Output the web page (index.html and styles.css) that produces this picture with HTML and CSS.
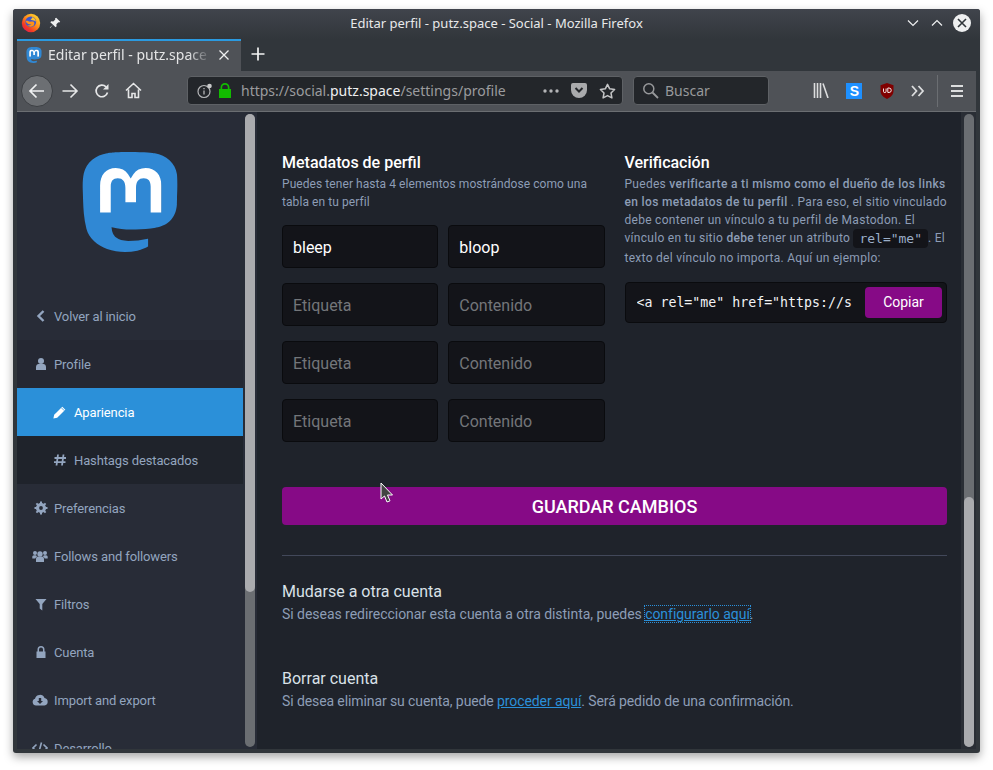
FILE: index.html
```html
<!DOCTYPE html>
<html lang="es">
  <head>
    <meta charset="utf-8" />
    <title>Editar perfil - putz.space - Social - Mozilla Firefox</title>
    <link rel="stylesheet" href="styles.css">
  </head>
  <body>
    <svg width="0" height="0" class="defs">
      <defs>
        <symbol id="masto" viewBox="0 0 24 24">
          <rect x="4.6" y="3.6" width="15" height="11.1" fill="#fff"/>
          <path fill="#3088d4" d="M23.268 5.313c-.35-2.578-2.617-4.61-5.304-5.004C17.51.242 15.792 0 11.813 0h-.03c-3.98 0-4.835.242-5.288.309C3.882.692 1.496 2.518.917 5.127.64 6.412.61 7.837.661 9.143c.074 1.874.088 3.745.26 5.611.118 1.24.325 2.47.62 3.68.55 2.237 2.777 4.098 4.96 4.857 2.336.792 4.849.923 7.256.38.265-.061.527-.132.786-.213.585-.184 1.27-.39 1.774-.753a.057.057 0 0 0 .023-.043v-1.809a.052.052 0 0 0-.02-.041.053.053 0 0 0-.046-.01 20.282 20.282 0 0 1-4.709.545c-2.73 0-3.463-1.284-3.674-1.818a5.593 5.593 0 0 1-.319-1.433.053.053 0 0 1 .066-.054c1.517.363 3.072.546 4.632.546.376 0 .75 0 1.125-.01 1.57-.044 3.224-.124 4.768-.422.038-.008.077-.015.11-.024 2.435-.464 4.753-1.92 4.989-5.604.008-.145.03-1.52.03-1.67.002-.512.167-3.63-.024-5.545zm-3.748 9.195h-2.561V8.29c0-1.309-.55-1.976-1.67-1.976-1.23 0-1.846.79-1.846 2.35v3.403h-2.546V8.663c0-1.56-.617-2.35-1.848-2.35-1.112 0-1.668.668-1.67 1.977v6.218H4.822V8.102c0-1.31.337-2.35 1.011-3.12.696-.77 1.608-1.164 2.74-1.164 1.311 0 2.302.5 2.962 1.498l.638 1.06.638-1.06c.66-.999 1.65-1.498 2.96-1.498 1.13 0 2.043.395 2.74 1.164.675.77 1.012 1.81 1.012 3.12z"/>
        </symbol>
      </defs>
    </svg>

    <div class="window">
      <!-- title bar -->
      <div class="titlebar">
        <svg class="ff-logo" width="20" height="20" viewBox="0 0 20 20">
          <defs>
            <linearGradient id="ffg" x1="0.85" y1="0.05" x2="0.15" y2="0.9">
              <stop offset="0" stop-color="#ffd52e"/>
              <stop offset="0.45" stop-color="#ff8f1a"/>
              <stop offset="0.8" stop-color="#f23a24"/>
              <stop offset="1" stop-color="#e0204f"/>
            </linearGradient>
          </defs>
          <circle cx="10" cy="10" r="9.200" fill="url(#ffg)"/>
          <circle cx="9.800" cy="8.800" r="5.400" fill="#3f56cc"/>
          <path fill="#ff9216" d="M4.800 8.200c.8-.5 2-.4 2.700.1.600.5 1.700.5 3 .3 1.600-.3 2.600.2 2.800 1.300.3 2.100-1.400 3.900-3.600 3.900-1.500 0-2.700-.7-3.400-1.700 1.500.6 3.200.2 4.100-1-1.700.5-3.400.1-4.500-1.100C5.300 9.500 4.900 8.900 4.800 8.200z"/>
          <path fill="#ffc42a" d="M11 4.200c2.600.4 4.100 2.500 3.700 4.900-.4-1.200-1.500-1.900-3-1.900-1 0-1.700-.2-2.200-.6.700-.6 1.600-1.200 1.500-2.400z"/>
        </svg>
        <svg class="pin" width="12" height="12" viewBox="0 0 12 12">
          <path fill="#eff0f1" d="M7.200.8l4 4-1 .8-.8-.3-2 2 .2 2-1 1L4 7.700 1.200 11 .8 10.600 4 7.800 1.300 5.200l1-1 2 .2 2-2-.3-.8z"/>
        </svg>
        <div class="win-title">Editar perfil - putz.space - Social - Mozilla Firefox</div>
        <div class="win-btns">
          <svg width="14" height="8" viewBox="0 0 14 8"><path d="M2 1.500l5 5 5-5" fill="none" stroke="#eff0f1" stroke-width="1.200"/></svg>
          <svg width="14" height="8" viewBox="0 0 14 8"><path d="M2 6.500l5-5 5 5" fill="none" stroke="#eff0f1" stroke-width="1.200"/></svg>
          <span class="win-close">
            <svg width="18" height="18" viewBox="0 0 18 18"><path d="M5 5l8 8M13 5l-8 8" stroke="#31363b" stroke-width="1.600"/></svg>
          </span>
        </div>
      </div>

      <!-- tabs -->
      <div class="tabbar">
        <div class="tab">
          <svg class="tab-icon" width="16" height="16"><use href="#masto"/></svg>
          <span class="tab-title">Editar perfil - putz.space - Social</span>
          <svg class="tab-close" width="12" height="12" viewBox="0 0 12 12"><path d="M1.500 1.500l9 9M10.500 1.500l-9 9" stroke="#eff0f1" stroke-width="1.300"/></svg>
        </div>
        <svg class="new-tab" width="16" height="16" viewBox="0 0 16 16"><path d="M8 1.500v13M1.500 8h13" stroke="#f2f3f4" stroke-width="1.700"/></svg>
      </div>

      <!-- toolbar -->
      <div class="toolbar">
        <div class="back-btn">
          <svg width="20" height="20" viewBox="0 0 20 20"><path d="M17 10H3.500M9.500 3.500L3 10l6.500 6.500" fill="none" stroke="#f0f1f2" stroke-width="1.700"/></svg>
        </div>
        <svg class="tb-icon" width="18" height="18" viewBox="0 0 18 18"><path d="M1.500 9h14M9.500 2.500L16 9l-6.500 6.500" fill="none" stroke="#e6e7e8" stroke-width="1.600"/></svg>
        <svg class="tb-icon" width="16" height="16" viewBox="0 0 16 16"><path d="M13.500 9.500A5.800 5.800 0 1 1 12 3.800" fill="none" stroke="#e6e7e8" stroke-width="1.700"/><path d="M14.500 1v5.500H9z" fill="#e6e7e8"/></svg>
        <svg class="tb-icon" width="17" height="17" viewBox="0 0 17 17"><path d="M1 8.500L8.500 1.500 16 8.500M3.500 7.500v8h3.500v-4h3v4h3.500v-8" fill="none" stroke="#e6e7e8" stroke-width="1.600"/></svg>

        <div class="urlbar">
          <svg width="16" height="16" viewBox="0 0 16 16"><circle cx="7" cy="8.500" r="6" fill="none" stroke="#b4b5b7" stroke-width="1.200"/><path d="M7 7.500v4M7 5v1.200" stroke="#b4b5b7" stroke-width="1.300"/><circle cx="12.500" cy="3" r="2.300" fill="#c8c9ca"/></svg>
          <svg class="lock" width="14" height="15" viewBox="0 0 14 15"><path fill="#12bc00" d="M1 6h1.500V4.500a4.500 4.500 0 0 1 9 0V6H13v9H1zm3.200 0h5.600V4.500a2.800 2.800 0 0 0-5.600 0z"/></svg>
          <div class="url"><span>https://social.</span><b>putz.space</b><span>/settings/profile</span></div>
          <svg class="dots" width="16" height="4" viewBox="0 0 16 4"><circle cx="2" cy="2" r="1.700" fill="#b4b5b7"/><circle cx="8" cy="2" r="1.700" fill="#b4b5b7"/><circle cx="14" cy="2" r="1.700" fill="#b4b5b7"/></svg>
          <svg class="pocket" width="16" height="15" viewBox="0 0 16 15"><path fill="#a9aaac" d="M2 0h12a2 2 0 0 1 2 2v5a8 8 0 0 1-16 0V2a2 2 0 0 1 2-2z"/><path d="M4.500 5L8 8.500 11.500 5" fill="none" stroke="#23262a" stroke-width="2"/></svg>
          <svg class="star" width="17" height="16" viewBox="0 0 17 16"><path d="M8.500 1.300l2.200 4.500 4.900.7-3.600 3.500.9 4.900-4.400-2.300-4.400 2.300.9-4.900L1.400 6.500l4.900-.7z" fill="none" stroke="#c4c5c6" stroke-width="1.500" stroke-linejoin="round"/></svg>
        </div>

        <div class="searchbar">
          <svg width="17" height="17" viewBox="0 0 17 17"><circle cx="6.800" cy="6.800" r="5" fill="none" stroke="#98999b" stroke-width="1.500"/><path d="M10.500 10.500l5.500 5.500" stroke="#98999b" stroke-width="1.800"/></svg>
          <span>Buscar</span>
        </div>

        <div class="addons">
          <svg width="16" height="15" viewBox="0 0 16 15"><path d="M1.500 0v15M4.500 0v15M7.500 0v15M10 .500L15 15" stroke="#dcddde" stroke-width="1.600"/></svg>
          <span class="s-ext">S</span>
          <svg width="14" height="16" viewBox="0 0 14 16"><path fill="#800000" d="M7 0l6.500 2.200V8c0 3.600-3 6.500-6.500 8C3.500 14.500.500 11.600.500 8V2.200z"/><path d="M3.500 5.500v2.800a1.300 1.300 0 0 0 2.600 0V5.500M7.800 5v4.500h1.200a2.200 2.200 0 0 0 0-4.500z" fill="none" stroke="#fff" stroke-width=".9"/></svg>
          <svg width="14" height="12" viewBox="0 0 14 12"><path d="M1 1l4.500 5L1 11M7.500 1L12 6l-4.500 5" fill="none" stroke="#dcddde" stroke-width="1.800"/></svg>
        </div>
        <div class="tb-sep"></div>
        <div class="burger"><i></i><i></i><i></i></div>
      </div>

      <!-- page -->
      <div class="page">
        <div class="sidebar">
          <div class="side-inner">
            <div class="logo"><svg width="100" height="100"><use href="#masto"/></svg></div>
            <ul class="nav">
              <li>
                <a><svg class="fa" viewBox="0 0 14 14"><path d="M9.500 2L4.500 7l5 5" fill="none" stroke="currentColor" stroke-width="2.400"/></svg>Volver al inicio</a>
              </li>
              <li class="nav-group">
                <a class="nav-parent"><svg class="fa" viewBox="0 0 14 14"><circle cx="7" cy="4" r="3" fill="currentColor"/><path d="M2 13V10c0-2 1.300-3 2.500-3h5c1.200 0 2.500 1 2.500 3v3z" fill="currentColor"/></svg>Profile</a>
                <a class="nav-sub active"><svg class="fa" viewBox="0 0 14 14"><path d="M1.200 9.800L9.300 1.700l3 3-8.100 8.100-3.800.8z" fill="currentColor"/><path d="M8.300 2.700l3 3" stroke="#2b90d9" stroke-width=".8"/></svg>Apariencia</a>
                <a class="nav-sub"><svg class="fa" viewBox="0 0 14 14"><path d="M5 1.500l-1.500 11M10.500 1.500L9 12.500M1.500 5h11.500M1 9.200h11.500" fill="none" stroke="currentColor" stroke-width="1.800"/></svg>Hashtags destacados</a>
              </li>
              <li>
                <a><svg class="fa" viewBox="0 0 14 14"><circle cx="7" cy="7" r="3.500" fill="none" stroke="currentColor" stroke-width="3.200"/><path d="M7 .500v2.400M7 11.100v2.400M.500 7h2.400M11.100 7h2.400M2.400 2.400l1.700 1.700M9.900 9.900l1.700 1.700M2.400 11.600l1.700-1.700M9.900 4.100l1.700-1.700" stroke="currentColor" stroke-width="2"/></svg>Preferencias</a>
              </li>
              <li>
                <a><svg class="fa wide" viewBox="0 0 16 14"><circle cx="8" cy="5" r="2.700" fill="currentColor"/><circle cx="3" cy="4" r="2" fill="currentColor"/><circle cx="13" cy="4" r="2" fill="currentColor"/><path d="M4 13V10c0-1.500 1-2.400 2-2.400h4c1 0 2 .9 2 2.400v3zM.300 9.500V8c0-1 .700-1.800 1.700-1.800h2.200c.2.500.500 1 .900 1.300-1 .5-1.600 1.200-1.800 2zM15.700 9.500V8c0-1-.7-1.800-1.700-1.800h-2.200c-.2.500-.5 1-.9 1.300 1 .5 1.600 1.200 1.800 2z" fill="currentColor"/></svg>Follows and followers</a>
              </li>
              <li>
                <a><svg class="fa" viewBox="0 0 14 14"><path d="M1.500 2h11L8.300 7v6.500L5.700 11.500V7z" fill="currentColor"/></svg>Filtros</a>
              </li>
              <li>
                <a><svg class="fa" viewBox="0 0 14 14"><path d="M2.500 6.500h1V4.500a3.500 3.500 0 0 1 7 0v2h1v6.500h-9zm2.500 0h4V4.500a2 2 0 0 0-4 0z" fill="currentColor"/></svg>Cuenta</a>
              </li>
              <li>
                <a><svg class="fa wide" viewBox="0 0 16 14"><path fill="currentColor" fill-rule="evenodd" d="M4 12.500A3.500 3.500 0 0 1 3 5.700 5 5 0 0 1 12.500 5 3.800 3.800 0 0 1 12.500 12.500zM6.800 5v3H5l3 3 3-3H9.200V5z"/></svg>Import and export</a>
              </li>
              <li>
                <a><svg class="fa wide" viewBox="0 0 16 14"><path d="M4.500 3.500L1 7l3.500 3.500M11.500 3.500L15 7l-3.500 3.500M9.500 1.500l-3 11" fill="none" stroke="currentColor" stroke-width="1.600"/></svg>Desarrollo</a>
              </li>
            </ul>
          </div>
          <div class="scroll"><div class="thumb side-thumb"></div></div>
        </div>

        <div class="main">
          <div class="content">
            <div class="cols">
              <div class="col">
                <h4>Metadatos de perfil</h4>
                <p class="hint">Puedes tener hasta 4 elementos mostrándose como una tabla en tu perfil</p>
                <div class="fields">
                  <div class="field filled">bleep</div>
                  <div class="field filled">bloop</div>
                  <div class="field">Etiqueta</div>
                  <div class="field">Contenido</div>
                  <div class="field">Etiqueta</div>
                  <div class="field">Contenido</div>
                  <div class="field">Etiqueta</div>
                  <div class="field">Contenido</div>
                </div>
              </div>
              <div class="col">
                <h4>Verificación</h4>
                <p class="hint verify">Puedes <strong>verificarte a ti mismo como el dueño de los links en los metadatos de tu perfil</strong> . Para eso, el sitio vinculado debe contener un vínculo a tu perfil de Mastodon. El vínculo en tu sitio <strong>debe</strong> tener un atributo <code>rel="me"</code>. El texto del vínculo no importa. Aquí un ejemplo:</p>
                <div class="copybox">
                  <span class="copy-text">&lt;a rel="me" href="https://s</span>
                  <span class="copy-btn">Copiar</span>
                </div>
              </div>
            </div>

            <div class="save">GUARDAR CAMBIOS</div>
            <hr class="divider">

            <h5>Mudarse a otra cuenta</h5>
            <p class="small">Si deseas redireccionar esta cuenta a otra distinta, puedes <a class="link focused">configurarlo aquí</a>.</p>

            <h5 class="second">Borrar cuenta</h5>
            <p class="small tight">Si desea eliminar su cuenta, puede <a class="link">proceder aquí</a>. Será pedido de una confirmación.</p>
          </div>
          <div class="scroll main-scroll"><div class="thumb main-thumb"></div></div>
        </div>
      </div>

      <!-- mouse pointer over the page -->
      <svg class="cursor" width="14" height="21" viewBox="0 0 14 21"><path d="M1 1v16l3.500-3 2.500 6 3-1.200-2.500-5.800H12.500z" fill="#444" stroke="#fff" stroke-width="1"/></svg>
    </div>
  </body>
</html>
```

FILE: styles.css
```css
html, body {
  height: 100%;
}

body {
  margin: 0;
  background: #fff;
  padding: 9px 13px 0;
  box-sizing: border-box;
  overflow: hidden;
}

.defs {
  position: absolute;
}

.window {
  position: relative;
  width: 967px;
  height: 744px;
  box-sizing: border-box;
  padding: 0 4px 4px;
  background: #31363b;
  border-radius: 3px;
  box-shadow: 0 4px 10px rgba(0, 0, 0, 0.35);
  display: flex;
  flex-direction: column;
  font-family: "Noto Sans", sans-serif;
}

/* title bar */
.titlebar {
  height: 30px;
  flex: none;
  box-sizing: border-box;
  display: flex;
  align-items: center;
  position: relative;
  color: #eff0f1;
  font-size: 13px;
  background: linear-gradient(#40444c, #31363b);
  margin: 0 -4px;
  padding: 0 9px 2px 8px;
  border-radius: 3px 3px 0 0;
}

.pin {
  margin-left: 8px;
}

.win-title {
  position: absolute;
  left: 0;
  right: 0;
  top: 5px;
  text-align: center;
  line-height: 18px;
  color: #e8e9ea;
}

.win-btns {
  margin-left: auto;
  display: flex;
  align-items: center;
  gap: 10px;
  position: relative;
}

.win-close {
  width: 18px;
  height: 18px;
  border-radius: 50%;
  background: #eff0f1;
  display: block;
  margin-left: -1px;
}

.win-close svg {
  display: block;
}

/* tabs */
.tabbar {
  height: 32px;
  flex: none;
  display: flex;
  align-items: center;
  background: #31363b;
}

.tab {
  width: 224px;
  height: 32px;
  box-sizing: border-box;
  display: flex;
  align-items: center;
  padding: 0 11px 4px 9px;
  background: #4f5257;
  border-top: 2px solid #2b9ae0;
  color: #e4e5e6;
  font-size: 14px;
}

.tab-icon, .tab-close {
  flex: none;
  margin-top: 2px;
}

.tab-title {
  flex: 1;
  margin: 0 7px 0 6px;
  overflow: hidden;
  white-space: nowrap;
  -webkit-mask-image: linear-gradient(to right, #000 86%, transparent);
  mask-image: linear-gradient(to right, #000 86%, transparent);
}

.new-tab {
  margin-left: 9px;
  margin-bottom: 2px;
}

/* toolbar */
.toolbar {
  height: 41px;
  flex: none;
  box-sizing: border-box;
  display: flex;
  align-items: center;
  background: #4f5257;
  border-bottom: 1px solid #6b6e72;
  padding: 0 0 1px 4px;
}

.back-btn {
  width: 32px;
  height: 32px;
  border-radius: 50%;
  background: #6c6f73;
  border: 1px solid #3c3f43;
  box-sizing: border-box;
  display: flex;
  align-items: center;
  justify-content: center;
  flex: none;
}

.tb-icon {
  margin-left: 8px;
  flex: none;
}

.tb-icon + .tb-icon {
  margin-left: 15px;
}

.urlbar, .searchbar {
  height: 29px;
  box-sizing: border-box;
  display: flex;
  align-items: center;
  background: #23262a;
  border: 1px solid #5e6165;
  border-radius: 4px;
  font-size: 14px;
  flex: none;
}

.urlbar {
  width: 436px;
  margin-left: 45px;
  padding: 0 6px 0 9px;
}

.lock {
  margin-left: 5px;
}

.url {
  margin-left: 9px;
  color: #9b9c9e;
  white-space: nowrap;
}

.url b {
  font-weight: 400;
  color: #eeeff0;
}

.dots {
  margin-left: auto;
}

.pocket {
  margin-left: 12px;
}

.star {
  margin-left: 12px;
}

.searchbar {
  width: 136px;
  margin-left: 10px;
  padding: 0 0 0 8px;
  gap: 6px;
  color: #98999b;
}

.addons {
  display: flex;
  align-items: center;
  width: 112px;
  margin-left: 44px;
  justify-content: space-between;
  flex: none;
}

.s-ext {
  width: 16px;
  height: 16px;
  background: #1e90ff;
  color: #fff;
  font: 700 14px/16px "Liberation Sans", sans-serif;
  text-align: center;
  display: block;
}

.tb-sep {
  width: 1px;
  height: 32px;
  background: #6b6e72;
  margin-left: 12px;
  flex: none;
}

.burger {
  margin-left: 13px;
  width: 12px;
  display: flex;
  flex-direction: column;
  gap: 3px;
}

.burger i {
  display: block;
  height: 2px;
  background: #dcddde;
}

/* page */
.page {
  flex: 1;
  display: flex;
  min-height: 0;
  background: #1f232b;
  font-family: Roboto, sans-serif;
}

.sidebar {
  width: 240px;
  flex: none;
  display: flex;
  background: #1f232b;
}

.side-inner {
  width: 226px;
  flex: none;
  overflow: hidden;
  background: #282c37;
}

.logo {
  height: 180px;
  padding-top: 40px;
  box-sizing: border-box;
  display: flex;
  justify-content: center;
}

.nav {
  list-style: none;
  margin: 0;
  padding: 0;
  font-size: 13px;
  letter-spacing: -0.12px;
}

.nav a {
  display: flex;
  align-items: center;
  height: 48px;
  padding-left: 37px;
  color: #93a5bf;
  position: relative;
}

.nav-group {
  background: #1f232b;
}

.nav .nav-parent {
  background: #252833;
}

.nav .nav-sub {
  padding-left: 57px;
}

.nav .active {
  background: #2b90d9;
  color: #fff;
}

.fa {
  position: absolute;
  left: 17px;
  top: 17px;
  width: 14px;
  height: 14px;
}

.fa.wide {
  left: 15px;
  width: 16px;
}

.nav-sub .fa {
  left: 36px;
}

.scroll {
  width: 14px;
  flex: none;
  box-sizing: border-box;
  padding: 2px;
  background: #1f232b;
}

.sidebar .scroll {
  background: #282c37;
  position: relative;
}

.scroll::before {
  content: "";
  display: block;
  height: 100%;
  background: #6b6e72;
  border-radius: 5px;
}

.thumb {
  position: absolute;
  width: 10px;
  background: #aaabae;
  border-radius: 5px;
}

.side-thumb {
  left: 2px;
  top: 2px;
  height: 478px;
}

.main {
  flex: 1;
  display: flex;
  min-width: 0;
}

.content {
  flex: 1;
  overflow: hidden;
  padding: 41px 14px 0 25px;
}

.main-scroll {
  position: relative;
  width: 15px;
  padding-left: 3px;
  background: #2a2e35;
}

.main-thumb {
  left: 3px;
  top: 385px;
  height: 250px;
}

.cols {
  display: flex;
  gap: 20px;
}

.col {
  flex: 1;
  min-width: 0;
}

h4 {
  margin: 0 0 2px;
  font-size: 16px;
  line-height: 20px;
  font-weight: 500;
  color: #fff;
}

.hint {
  margin: 0;
  font-size: 12px;
  line-height: 18px;
  letter-spacing: 0.07px;
  color: #8d9db6;
}

.hint.verify {
  letter-spacing: 0.28px;
}

.hint strong {
  font-weight: 500;
  letter-spacing: 0.34px;
}

/* taller than the text so the next line sits a bit lower, like the original */
.hint code {
  font-family: "DejaVu Sans Mono", monospace;
  font-size: 13px;
  line-height: 20px;
  vertical-align: -1px;
  letter-spacing: 0;
  background: #131419;
  color: #9baec8;
  padding: 2px 6px;
  border-radius: 4px;
}

.fields {
  display: grid;
  grid-template-columns: 1fr 1fr;
  gap: 15px 10px;
  margin-top: 14px;
}

.field {
  height: 43px;
  box-sizing: border-box;
  padding: 1px 10px 0;
  display: flex;
  align-items: center;
  font-size: 16px;
  color: #73767a;
  background: #131419;
  border: 1px solid #0a0b0e;
  border-radius: 4px;
}

.field.filled {
  color: #fff;
}

.copybox {
  margin-top: 15px;
  height: 41px;
  box-sizing: border-box;
  background: #131419;
  border: 1px solid #0a0b0e;
  border-radius: 4px;
  display: flex;
  align-items: center;
  padding: 0 4px 0 11px;
}

.copy-text {
  font-family: "DejaVu Sans Mono", monospace;
  font-size: 13.25px;
  color: #f2f3f5;
  white-space: nowrap;
  overflow: hidden;
  flex: 1;
}

.copy-btn {
  width: 77px;
  height: 31px;
  margin-left: 12px;
  background: #860a86;
  border-radius: 4px;
  color: #fff;
  font-size: 14px;
  line-height: 31px;
  text-align: center;
  flex: none;
}

.save {
  margin-top: 45px;
  height: 38px;
  line-height: 40px;
  background: #860a86;
  border-radius: 4px;
  color: #fff;
  text-align: center;
  font-size: 18px;
  font-weight: 500;
}

.divider {
  margin: 30px 0 26px;
  border: 0;
  border-top: 1px solid #42485a;
}

h5 {
  margin: 0 0 2px;
  font-size: 16px;
  line-height: 20px;
  font-weight: 400;
  color: #d9e1e8;
}

h5.second {
  margin-top: 45px;
}

.small {
  margin: 0;
  font-size: 14px;
  line-height: 20px;
  letter-spacing: -0.04px;
  color: #8d9db6;
}

.small.tight {
  letter-spacing: -0.1px;
}

.link {
  color: #2b90d9;
  text-decoration: underline;
}

.focused {
  outline: 1px dotted #2b90d9;
}

.cursor {
  position: absolute;
  left: 367px;
  top: 473px;
}
```
